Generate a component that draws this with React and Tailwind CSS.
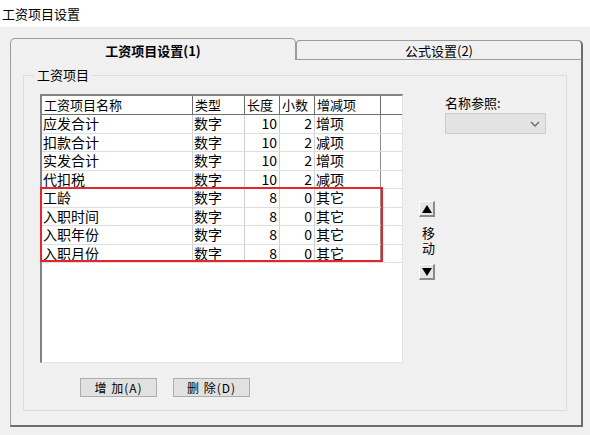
import React from "react";

const cols = [
  { key: "name", w: 151, label: "工资项目名称", align: "left" },
  { key: "type", w: 52, label: "类型", align: "left" },
  { key: "len", w: 35, label: "长度", align: "right" },
  { key: "dec", w: 35, label: "小数", align: "right" },
  { key: "sign", w: 66, label: "增减项", align: "left" },
];

const rows = [
  ["应发合计", "数字", "10", "2", "增项"],
  ["扣款合计", "数字", "10", "2", "减项"],
  ["实发合计", "数字", "10", "2", "增项"],
  ["代扣税", "数字", "10", "2", "减项"],
  ["工龄", "数字", "8", "0", "其它"],
  ["入职时间", "数字", "8", "0", "其它"],
  ["入职年份", "数字", "8", "0", "其它"],
  ["入职月份", "数字", "8", "0", "其它"],
];

function Arrow({ up }) {
  return (
    <div className="w-[16px] h-[16px] bg-[#e6e6e6] border-t border-l border-[#ffffff] border-r-2 border-b-2 border-r-[#8a8a8a] border-b-[#8a8a8a] flex items-center justify-center">
      <svg width="10" height="8" viewBox="0 0 10 8">
        {up ? <polygon points="5,0 10,8 0,8" fill="#000" /> : <polygon points="0,0 10,0 5,8" fill="#000" />}
      </svg>
    </div>
  );
}

export default function App() {
  return (
    <div className="w-[590px] h-[435px] bg-[#f0f0f0] font-['Noto_Sans_CJK_SC',sans-serif] text-black overflow-hidden">
      <div className="h-[27px] bg-white pl-[2px] flex items-center text-[13px] leading-none">工资项目设置</div>
      <div className="pl-[10px] pr-[7px] pt-[11px]">
        <div className="flex items-end h-[22px]">
          <div className="w-[286px] h-[22px] border-t border-l border-r border-[#9a9a9a] rounded-t-[5px] flex items-center justify-center text-[13px] font-bold leading-none pt-[2px]">
            工资项目设置(1)
          </div>
          <div className="flex-1 h-[20px] border border-[#9a9a9a] border-r-2 border-r-[#6e6e6e] rounded-tr-[5px] rounded-tl-[4px] flex items-center justify-center text-[13px] leading-none">
            公式设置(2)
          </div>
        </div>
        <div className="h-[367px] border-l border-[#a0a0a0] border-r-2 border-r-[#6e6e6e] border-b-2 border-b-[#6e6e6e] pl-[12px] pt-[7px] pr-[14px]">
          <fieldset className="h-[344px] border border-[#d6dde3] pl-0">
            <legend className="ml-[10px] px-[3px] text-[13px] leading-[16px]">工资项目</legend>
            <div className="flex items-start">
              <div className="ml-[16px] mt-[11px] flex flex-col">
                <div className="relative w-[363px] h-[269px] bg-white border-t-2 border-l-2 border-[#828282] border-r border-b border-r-[#e3e3e3] border-b-[#e3e3e3]">
                  <div className="flex h-[19px] border-b border-[#6d6d6d]">
                    {cols.map((c) => (
                      <div
                        key={c.key}
                        style={{ width: c.w }}
                        className="shrink-0 border-r border-[#6d6d6d] pl-[2px] text-[13px] leading-[18px]"
                      >
                        {c.label}
                      </div>
                    ))}
                  </div>
                  {rows.map((r, i) => (
                    <div key={i} className="flex h-[18.5px] border-b border-[#dedede]">
                      {cols.map((c, j) => (
                        <div
                          key={c.key}
                          style={{ width: c.w }}
                          className={
                            "shrink-0 border-r text-[14px] leading-[17px] " +
                            (j === 4 ? "border-[#8c8c8c] " : "border-[#d0d0d0] ") +
                            (c.align === "right" ? "text-right pr-[2px]" : "pl-[1px]")
                          }
                        >
                          {r[j]}
                        </div>
                      ))}
                    </div>
                  ))}
                  <div className="absolute left-[-2px] top-[91px] w-[343px] h-[75px] border-2 border-[#e2262c]"></div>
                </div>
                <div className="flex gap-[16px] pl-[40px] mt-[15px]">
                  <button className="w-[77px] h-[19px] bg-[#e1e1e1] border border-[#adadad] text-[12px] leading-none tracking-[1px]">增 加(A)</button>
                  <button className="w-[77px] h-[19px] bg-[#e1e1e1] border border-[#adadad] text-[12px] leading-none tracking-[1px]">删 除(D)</button>
                </div>
              </div>
              <div className="ml-[15px] mt-[118px] w-[18px] flex flex-col items-center">
                <Arrow up />
                <div className="mt-[10px] mb-[7px] pl-[2px] text-[13px] leading-[16px] tracking-[2px] [writing-mode:vertical-rl]">
                  移动
                </div>
                <Arrow />
              </div>
              <div className="ml-[9px] mt-[12px] flex flex-col">
                <div className="text-[13px] leading-[16px]">名称参照:</div>
                <div className="mt-[2px] w-[101px] h-[21px] bg-[#e3e3e3] border border-[#cccccc] flex items-center justify-end pr-[5px]">
                  <svg width="10" height="6" viewBox="0 0 10 6">
                    <polyline points="1,1 5,5 9,1" fill="none" stroke="#6a6a6a" strokeWidth="1.3" />
                  </svg>
                </div>
              </div>
            </div>
          </fieldset>
        </div>
      </div>
    </div>
  );
}
